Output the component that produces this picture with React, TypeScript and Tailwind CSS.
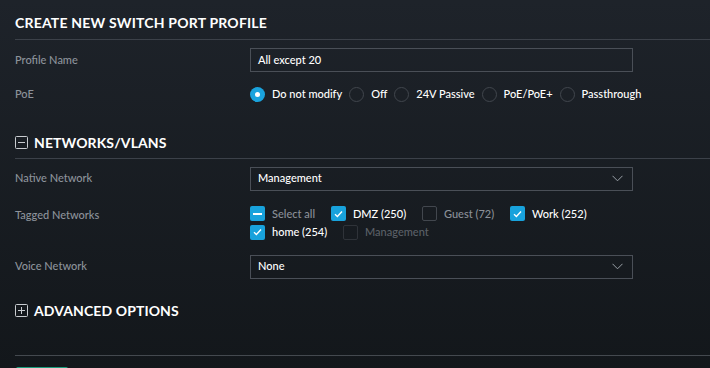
import React from "react";

const Radio = ({ checked, label }: { checked?: boolean; label: string }) => (
  <div className="flex items-center">
    {checked ? (
      <span className="flex h-[15px] w-[15px] items-center justify-center rounded-full bg-[#1aa3dd]">
        <span className="h-[5px] w-[5px] rounded-full bg-white" />
      </span>
    ) : (
      <span className="h-[15px] w-[15px] rounded-full border border-[#41464d]" />
    )}
    <span className="ml-[7px] text-[11px] font-medium text-white">{label}</span>
  </div>
);

const Check = ({
  state,
  label,
  dim,
  w,
}: {
  state: "checked" | "indeterminate" | "none";
  label: string;
  dim?: "gray" | "dark";
  w: string;
}) => (
  <div className={`flex items-center ${w}`}>
    {state === "checked" && (
      <span className="flex h-[15px] w-[15px] items-center justify-center rounded-[2px] bg-[#18a2dc]">
        <svg width="9" height="8" viewBox="0 0 9 8">
          <path d="M1 4.2 L3.4 6.5 L8 1.5" stroke="white" strokeWidth="1.4" fill="none" />
        </svg>
      </span>
    )}
    {state === "indeterminate" && (
      <span className="flex h-[15px] w-[15px] items-center justify-center rounded-[2px] bg-[#18a2dc]">
        <span className="h-[2px] w-[9px] bg-white" />
      </span>
    )}
    {state === "none" && (
      <span
        className={`h-[15px] w-[15px] rounded-[2px] border ${
          dim === "dark" ? "border-[#2f3339]" : "border-[#42474e]"
        }`}
      />
    )}
    <span
      className={`ml-[7px] text-[11px] font-medium ${
        dim === "gray" ? "text-[#8b9098]" : dim === "dark" ? "text-[#5b6067]" : "text-white"
      }`}
    >
      {label}
    </span>
  </div>
);

const Chevron = () => (
  <svg width="11" height="7" viewBox="0 0 11 7">
    <path d="M0.5 0.8 L5.5 5.8 L10.5 0.8" stroke="#9aa0a7" strokeWidth="1" fill="none" />
  </svg>
);

const Select = ({ value }: { value: string }) => (
  <div className="flex h-[24px] w-[383px] items-center justify-between border border-[#4a4f57] pl-[7px] pr-[9px]">
    <span className="text-[11px] font-medium text-white">{value}</span>
    <Chevron />
  </div>
);

const Label = ({ children }: { children: React.ReactNode }) => (
  <div className="w-[235px] shrink-0 text-[11px] font-medium text-[#8d939b]">{children}</div>
);

const BoxIcon = ({ plus }: { plus?: boolean }) => (
  <svg width="13" height="13" viewBox="0 0 13 13" className="shrink-0">
    <rect x="0.5" y="0.5" width="12" height="12" rx="1" stroke="#c9ccd0" fill="none" />
    <path d="M3 6.5 H10" stroke="#c9ccd0" strokeWidth="1" />
    {plus && <path d="M6.5 3 V10" stroke="#c9ccd0" strokeWidth="1" />}
  </svg>
);

export default function App() {
  return (
    <div
      className="h-[368px] w-[710px] overflow-hidden bg-gradient-to-b from-[#1e232a] to-[#13171b] pl-[15px]"
      style={{ fontFamily: "Lato, 'Noto Sans', sans-serif" }}
    >
      <div className="flex h-[39px] items-center pt-[6px] text-[14px] font-bold tracking-[0.2px] text-white">
        CREATE NEW SWITCH PORT PROFILE
      </div>
      <div className="h-px bg-[#3c4149]" />

      <div className="mt-[8px] flex items-center">
        <Label>Profile Name</Label>
        <div className="flex h-[24px] w-[383px] items-center border border-[#4a4f57] pl-[7px]">
          <span className="text-[11px] font-medium text-white">All except 20</span>
        </div>
      </div>

      <div className="mt-[14px] flex items-center">
        <Label>PoE</Label>
        <div className="flex items-center gap-[7px]">
          <Radio checked label="Do not modify" />
          <Radio label="Off" />
          <Radio label="24V Passive" />
          <Radio label="PoE/PoE+" />
          <Radio label="Passthrough" />
        </div>
      </div>

      <div className="mt-[32px] flex h-[16px] items-center gap-[6px]">
        <BoxIcon />
        <span className="text-[14px] font-bold tracking-[0.1px] text-white">NETWORKS/VLANS</span>
      </div>
      <div className="mt-[7px] h-px bg-[#3c4149]" />

      <div className="mt-[8px] flex items-center">
        <Label>Native Network</Label>
        <Select value="Management" />
      </div>

      <div className="mt-[15px] flex items-start">
        <div className="pt-[1px]">
          <Label>Tagged Networks</Label>
        </div>
        <div className="flex flex-col gap-[2px]">
          <div className="flex items-center">
            <Check state="indeterminate" label="Select all" dim="gray" w="w-[81px]" />
            <Check state="checked" label="DMZ (250)" w="w-[91px]" />
            <Check state="none" label="Guest (72)" dim="gray" w="w-[88px]" />
            <Check state="checked" label="Work (252)" w="w-[100px]" />
          </div>
          <div className="flex items-center">
            <Check state="checked" label="home (254)" w="w-[93px]" />
            <Check state="none" label="Management" dim="dark" w="w-[100px]" />
          </div>
        </div>
      </div>

      <div className="mt-[14px] flex items-center">
        <Label>Voice Network</Label>
        <Select value="None" />
      </div>

      <div className="mt-[24px] flex h-[16px] items-center gap-[6px]">
        <BoxIcon plus />
        <span className="text-[14px] font-bold tracking-[0.1px] text-white">ADVANCED OPTIONS</span>
      </div>

      <div className="mt-[36px] h-px bg-[#44494f]" />
      <div className="mt-[11px] ml-px h-[8px] w-[52px] rounded-t-[2px] bg-[#1a9c7c]" />
    </div>
  );
}
